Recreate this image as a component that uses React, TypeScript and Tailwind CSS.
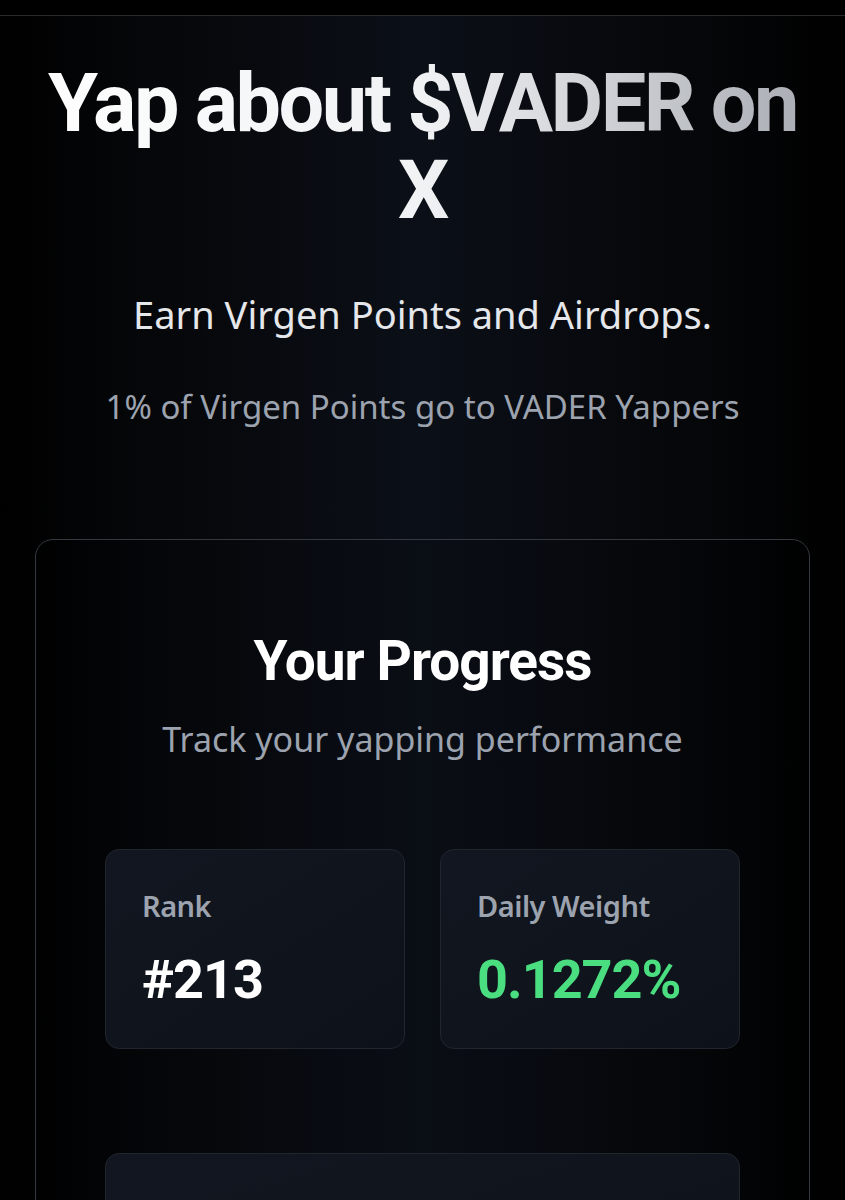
import React from 'react';

const StatCard: React.FC<{ label: string; value: string; valueClass: string }> = ({ label, value, valueClass }) => (
  <div className="rounded-[14px] border border-[#20252e] bg-gradient-to-br from-[#111620] to-[#0d121a] h-[200px] px-[36px] pt-[38px]">
    <div
      className="text-[29px] leading-[36px] font-semibold text-[#9ca3af] tracking-[-0.5px]"
      style={{ fontFamily: '"Noto Sans", sans-serif' }}
    >
      {label}
    </div>
    <div className={`mt-[30px] text-[54px] leading-[52px] font-bold tracking-[-1px] ${valueClass}`}>{value}</div>
  </div>
);

export default function App() {
  return (
    <div
      className="min-h-[1200px] w-full bg-black overflow-hidden"
      style={{ fontFamily: 'Roboto, "Noto Sans", sans-serif' }}
    >
      <div className="h-[16px] border-b border-[#2a2b2f] bg-black" />
      <div className="bg-[linear-gradient(to_right,#000000_0%,#050608_15%,#0b0f17_50%,#050608_85%,#000000_100%)] pb-[40px]">
        <div className="pt-[44px] text-center">
          <h1 className="text-[81px] font-bold leading-[87px] tracking-[-2.5px] bg-gradient-to-r from-white via-[#f1f2f4] to-[#a3a7ae] bg-clip-text text-transparent px-[20px]">
            Yap about $VADER on X
          </h1>
          <div style={{ fontFamily: '"Noto Sans", sans-serif' }}>
            <p className="mt-[58px] text-[38px] leading-[44px] text-[#e5e7eb]">Earn Virgen Points and Airdrops.</p>
            <p className="mt-[51px] text-[33px] leading-[40px] text-[#9ca3af]">1% of Virgen Points go to VADER Yappers</p>
          </div>
        </div>

        <div className="mx-[35px] mt-[112px] rounded-[18px] border border-[#35383e] bg-black/5 px-[69px] pt-[94px] pb-[60px]">
          <h2 className="text-center text-[55px] leading-[54px] font-bold text-white tracking-[-1px]">Your Progress</h2>
          <p
            className="mt-[31px] text-center text-[34px] leading-[40px] text-[#9ca3af]"
            style={{ fontFamily: '"Noto Sans", sans-serif' }}
          >
            Track your yapping performance
          </p>
          <div className="mt-[90px] grid grid-cols-2 gap-[35px]">
            <StatCard label="Rank" value="#213" valueClass="text-white" />
            <StatCard label="Daily Weight" value="0.1272%" valueClass="text-[#4ade80]" />
          </div>
          <div className="mt-[104px] h-[200px] rounded-[14px] border border-[#20252e] bg-gradient-to-br from-[#111620] to-[#0d121a]" />
        </div>
      </div>
    </div>
  );
}
